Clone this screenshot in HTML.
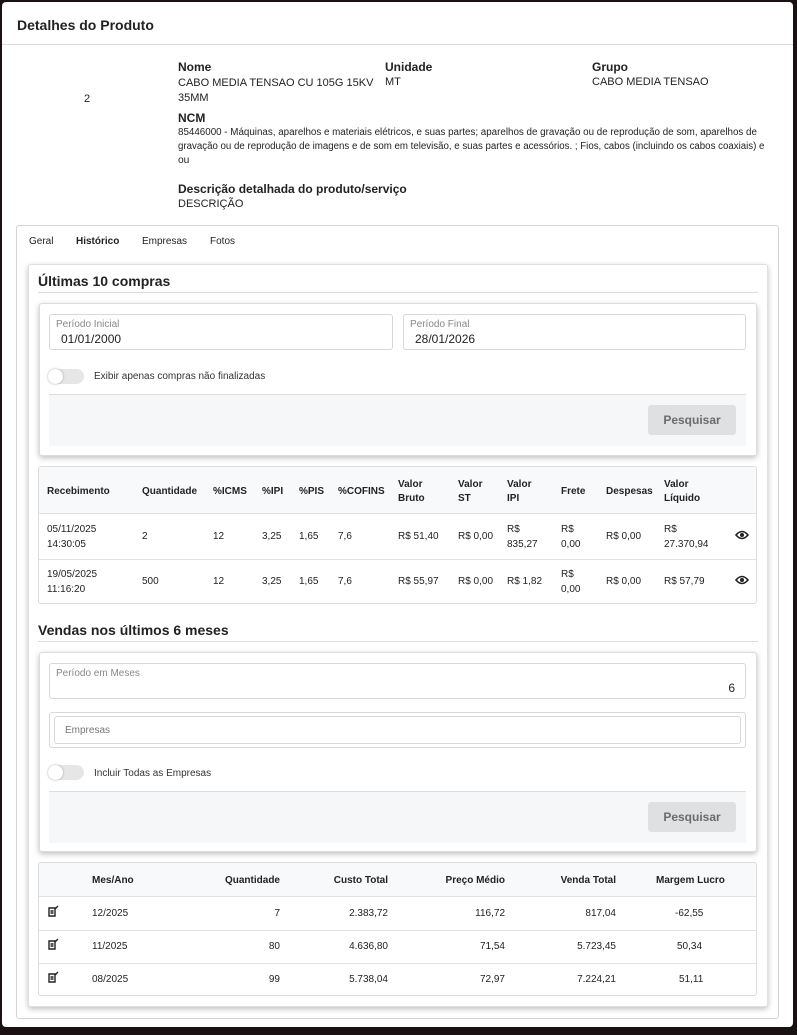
<!DOCTYPE html>
<html><head><meta charset="utf-8"><style>
*{box-sizing:border-box;margin:0;padding:0}
body{width:797px;height:1035px;background:#1a1212;position:relative;overflow:hidden;font-family:"Liberation Sans",sans-serif;color:#222}
.a{position:absolute;white-space:nowrap}
#pg{position:absolute;left:2px;top:2px;width:791px;height:1025px;background:#fff;border-radius:4px}
.lb{font-weight:bold;font-size:12px;color:#222}
.v{font-size:11px;color:#222}
.box{position:absolute;border:1px solid #dcdcdc;border-radius:3px;background:#fff}
.sh{box-shadow:0 2px 6px rgba(0,0,0,.25)}
.in{position:absolute;border:1px solid #d8d8d8;border-radius:3px;background:#fff}
.il{position:absolute;font-size:10px;color:#888;left:6px;top:4px}
.iv{position:absolute;font-size:12px;color:#222}
.tg{position:absolute;width:36px;height:15px;border-radius:8px;background:#e6e6e6}
.tg:after{content:"";position:absolute;left:0;top:0;width:15px;height:15px;border-radius:50%;background:#fff;box-shadow:0 0 2px rgba(0,0,0,.35)}
.ft{position:absolute;background:#f6f7f9;border-top:1px solid #ddd}
.bt{position:absolute;width:88px;height:30px;background:#dfe0e2;border-radius:3px;color:#6b6b6b;font-weight:bold;font-size:12px;text-align:center;line-height:30px}
.t{font-size:10px;color:#222}
.th{font-size:10px;font-weight:bold;color:#222}
.hl{position:absolute;height:1px;background:#e2e2e2}
</style></head><body>
<div id="pg">
<div class="a" style="left:15px;top:15px;font-size:14px;font-weight:bold">Detalhes do Produto</div>
<div class="hl" style="left:0;top:42px;width:791px;background:#dadada"></div>
<div class="a" style="left:82px;top:91px;font-size:11px">2</div>
<div class="a lb" style="left:176px;top:58px">Nome</div>
<div class="a v" style="left:176px;top:74px;line-height:15px">CABO MEDIA TENSAO CU 105G 15KV<br>35MM</div>
<div class="a lb" style="left:383px;top:58px">Unidade</div>
<div class="a v" style="left:383px;top:74px">MT</div>
<div class="a lb" style="left:590px;top:58px">Grupo</div>
<div class="a v" style="left:590px;top:74px">CABO MEDIA TENSAO</div>
<div class="a lb" style="left:176px;top:109px">NCM</div>
<div class="a v" style="left:176px;top:124px;line-height:14px;font-size:10.2px"><span style="font-size:9.8px">85446000 - Máquinas, aparelhos e materiais elétricos, e suas partes; aparelhos de gravação ou de reprodução de som, aparelhos de</span><br><span style="font-size:9.7px">gravação ou de reprodução de imagens e de som em televisão, e suas partes e acessórios. ; Fios, cabos (incluindo os cabos coaxiais) e</span><br>ou</div>
<div class="a lb" style="left:176px;top:180px">Descrição detalhada do produto/serviço</div>
<div class="a v" style="left:176px;top:196px">DESCRIÇÃO</div>

<div class="box" style="left:14px;top:223px;width:763px;height:794px;border-color:#d4d4d4"></div>
<div class="a" style="left:27px;top:234px;font-size:10px">Geral</div>
<div class="a" style="left:74px;top:234px;font-size:10px;font-weight:bold">Histórico</div>
<div class="a" style="left:140px;top:234px;font-size:10px">Empresas</div>
<div class="a" style="left:208px;top:234px;font-size:10px">Fotos</div>

<div class="box sh" style="left:26px;top:262px;width:740px;height:743px;border-color:#e0e0e0"></div>
<div class="a" style="left:36px;top:271px;font-size:14px;font-weight:bold">Últimas 10 compras</div>
<div class="hl" style="left:36px;top:290px;width:720px;background:#dcdcdc"></div>

<div class="box sh" style="left:37px;top:301px;width:718px;height:153px"></div>
<div class="in" style="left:47px;top:312px;width:344px;height:36px"><span class="il">Período Inicial</span><span class="iv" style="left:11px;top:17px">01/01/2000</span></div>
<div class="in" style="left:401px;top:312px;width:343px;height:36px"><span class="il">Período Final</span><span class="iv" style="left:11px;top:17px">28/01/2026</span></div>
<div class="tg" style="left:46px;top:367px"></div>
<div class="a" style="left:92px;top:369px;font-size:10px;color:#333">Exibir apenas compras não finalizadas</div>
<div class="ft" style="left:47px;top:392px;width:697px;height:52px"></div>
<div class="bt" style="left:646px;top:403px">Pesquisar</div>

<div class="box" style="left:36px;top:464px;width:719px;height:138px;overflow:hidden">
<div style="position:absolute;left:0;top:0;width:719px;height:47px;background:#f8f9fa;border-bottom:1px solid #e2e2e2"></div>
<div style="position:absolute;left:0;top:92px;width:719px;height:1px;background:#e2e2e2"></div>
</div>
<div class="a th" style="left:45px;top:484px">Recebimento</div>
<div class="a th" style="left:140px;top:484px">Quantidade</div>
<div class="a th" style="left:211px;top:484px">%ICMS</div>
<div class="a th" style="left:260px;top:484px">%IPI</div>
<div class="a th" style="left:297px;top:484px">%PIS</div>
<div class="a th" style="left:336px;top:484px">%COFINS</div>
<div class="a th" style="left:396px;top:476px;line-height:14px">Valor<br>Bruto</div>
<div class="a th" style="left:456px;top:476px;line-height:14px">Valor<br>ST</div>
<div class="a th" style="left:505px;top:476px;line-height:14px">Valor<br>IPI</div>
<div class="a th" style="left:559px;top:484px">Frete</div>
<div class="a th" style="left:604px;top:484px">Despesas</div>
<div class="a th" style="left:662px;top:476px;line-height:14px">Valor<br>Líquido</div>

<div class="a t" style="left:45px;top:520px;line-height:15px">05/11/2025<br>14:30:05</div>
<div class="a t" style="left:140px;top:529px">2</div>
<div class="a t" style="left:211px;top:529px">12</div>
<div class="a t" style="left:260px;top:529px">3,25</div>
<div class="a t" style="left:297px;top:529px">1,65</div>
<div class="a t" style="left:336px;top:529px">7,6</div>
<div class="a t" style="left:396px;top:529px">R$ 51,40</div>
<div class="a t" style="left:456px;top:529px">R$ 0,00</div>
<div class="a t" style="left:505px;top:520px;line-height:15px">R$<br>835,27</div>
<div class="a t" style="left:559px;top:520px;line-height:15px">R$<br>0,00</div>
<div class="a t" style="left:604px;top:529px">R$ 0,00</div>
<div class="a t" style="left:662px;top:520px;line-height:15px">R$<br>27.370,94</div>

<div class="a t" style="left:45px;top:565px;line-height:15px">19/05/2025<br>11:16:20</div>
<div class="a t" style="left:140px;top:574px">500</div>
<div class="a t" style="left:211px;top:574px">12</div>
<div class="a t" style="left:260px;top:574px">3,25</div>
<div class="a t" style="left:297px;top:574px">1,65</div>
<div class="a t" style="left:336px;top:574px">7,6</div>
<div class="a t" style="left:396px;top:574px">R$ 55,97</div>
<div class="a t" style="left:456px;top:574px">R$ 0,00</div>
<div class="a t" style="left:505px;top:574px">R$ 1,82</div>
<div class="a t" style="left:559px;top:565px;line-height:15px">R$<br>0,00</div>
<div class="a t" style="left:604px;top:574px">R$ 0,00</div>
<div class="a t" style="left:662px;top:574px">R$ 57,79</div>
<svg class="a" style="left:733px;top:528px" width="14" height="10" viewBox="0 0 14 10"><path d="M1 5Q7-2 13 5Q7 12 1 5Z" fill="none" stroke="#222" stroke-width="1.6"/><circle cx="7" cy="5" r="2" fill="#222"/></svg>
<svg class="a" style="left:733px;top:573px" width="14" height="10" viewBox="0 0 14 10"><path d="M1 5Q7-2 13 5Q7 12 1 5Z" fill="none" stroke="#222" stroke-width="1.6"/><circle cx="7" cy="5" r="2" fill="#222"/></svg>

<div class="a" style="left:36px;top:620px;font-size:14px;font-weight:bold">Vendas nos últimos 6 meses</div>
<div class="hl" style="left:36px;top:639px;width:720px;background:#dcdcdc"></div>

<div class="box sh" style="left:37px;top:650px;width:718px;height:200px"></div>
<div class="in" style="left:47px;top:661px;width:697px;height:36px"><span class="il">Período em Meses</span><span class="iv" style="right:10px;top:17px">6</span></div>
<div class="in" style="left:47px;top:710px;width:697px;height:36px"><div class="in" style="left:4px;top:3px;width:687px;height:28px"><span class="a" style="left:10px;top:8px;font-size:10px;color:#777">Empresas</span></div></div>
<div class="tg" style="left:46px;top:763px"></div>
<div class="a" style="left:92px;top:766px;font-size:10px;color:#333">Incluir Todas as Empresas</div>
<div class="ft" style="left:47px;top:789px;width:697px;height:52px"></div>
<div class="bt" style="left:646px;top:800px">Pesquisar</div>

<div class="box" style="left:36px;top:860px;width:719px;height:134px;overflow:hidden">
<div style="position:absolute;left:0;top:0;width:719px;height:34px;background:#f8f9fa;border-bottom:1px solid #e2e2e2"></div>
<div style="position:absolute;left:0;top:67px;width:719px;height:1px;background:#e2e2e2"></div>
<div style="position:absolute;left:0;top:100px;width:719px;height:1px;background:#e2e2e2"></div>
</div>
<div class="a th" style="left:90px;top:873px">Mes/Ano</div>
<div class="a th" style="right:513px;top:873px">Quantidade</div>
<div class="a th" style="right:405px;top:873px">Custo Total</div>
<div class="a th" style="right:288px;top:873px">Preço Médio</div>
<div class="a th" style="right:177px;top:873px">Venda Total</div>
<div class="a th" style="left:654px;top:873px">Margem Lucro</div>

<div class="a t" style="left:90px;top:906px">12/2025</div>
<div class="a t" style="right:513px;top:906px">7</div>
<div class="a t" style="right:405px;top:906px">2.383,72</div>
<div class="a t" style="right:288px;top:906px">116,72</div>
<div class="a t" style="right:177px;top:906px">817,04</div>
<div class="a t" style="left:673px;top:906px">-62,55</div>
<div class="a t" style="left:90px;top:939px">11/2025</div>
<div class="a t" style="right:513px;top:939px">80</div>
<div class="a t" style="right:405px;top:939px">4.636,80</div>
<div class="a t" style="right:288px;top:939px">71,54</div>
<div class="a t" style="right:177px;top:939px">5.723,45</div>
<div class="a t" style="left:675px;top:939px">50,34</div>
<div class="a t" style="left:90px;top:972px">08/2025</div>
<div class="a t" style="right:513px;top:972px">99</div>
<div class="a t" style="right:405px;top:972px">5.738,04</div>
<div class="a t" style="right:288px;top:972px">72,97</div>
<div class="a t" style="right:177px;top:972px">7.224,21</div>
<div class="a t" style="left:677px;top:972px">51,11</div>
<svg class="a" style="left:46px;top:903px" width="11" height="12" viewBox="0 0 11 12"><path d="M1 3H7V11H1Z M2.5 6H5.5 M2.5 8H5.5 M7 4L10 1" fill="none" stroke="#222" stroke-width="1.4"/></svg>
<svg class="a" style="left:46px;top:936px" width="11" height="12" viewBox="0 0 11 12"><path d="M1 3H7V11H1Z M2.5 6H5.5 M2.5 8H5.5 M7 4L10 1" fill="none" stroke="#222" stroke-width="1.4"/></svg>
<svg class="a" style="left:46px;top:969px" width="11" height="12" viewBox="0 0 11 12"><path d="M1 3H7V11H1Z M2.5 6H5.5 M2.5 8H5.5 M7 4L10 1" fill="none" stroke="#222" stroke-width="1.4"/></svg>
</div>
</body></html>
